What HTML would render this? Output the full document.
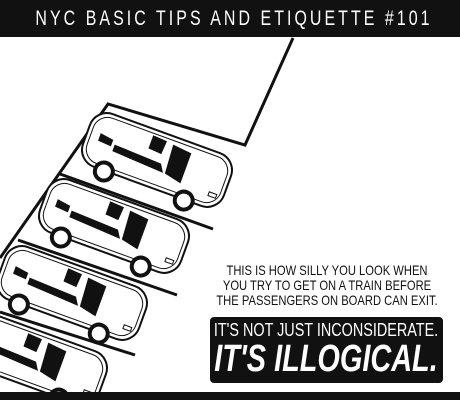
<!DOCTYPE html>
<html><head><style>
html,body{margin:0;padding:0;background:#fff;}
body{width:460px;height:400px;position:relative;overflow:hidden;font-family:"Liberation Sans",sans-serif;}
.hdr{position:absolute;left:0;top:0;width:460px;height:37px;background:#111;}
.hdr div{position:absolute;left:234px;top:0;white-space:nowrap;color:#fff;font-size:21px;letter-spacing:4px;line-height:37px;transform:translateX(-50%) scaleX(.76);}
.ftr{position:absolute;left:0;top:392px;width:460px;height:8px;background:#111;}
.ln{position:absolute;left:327px;white-space:nowrap;transform:translateX(-50%) scaleX(.8);font-size:14px;line-height:15px;color:#111;}
.box{position:absolute;left:210px;top:317px;width:233px;height:66px;background:#111;border-radius:4px;}
.bx{position:absolute;left:116px;white-space:nowrap;color:#fff;}
.b1{top:3px;font-size:18px;line-height:20px;transform:translateX(-50%) scaleX(.8);}
.b2{top:22px;font-size:38px;line-height:40px;font-style:italic;font-weight:bold;transform:translateX(-50%) scaleX(.76);}
</style></head><body>
<div class="hdr"><div>NYC BASIC TIPS AND ETIQUETTE #101</div></div>
<svg width="460" height="400" style="position:absolute;left:0;top:0">
<defs>
<g id="car">
<rect x="-75" y="-28" width="150" height="56" rx="18" fill="#fff" stroke="#111" stroke-width="2"/>
<rect x="-71" y="-24" width="142" height="48" rx="15" fill="none" stroke="#111" stroke-width="1"/>
<polygon points="10,-20 30,-18 30,14 12,10" fill="#111"/>
<polygon points="-12,-22 3,-21 2,-7 -12,-8" fill="#111"/>
<polygon points="-45,0 5,2 10,10 -45,7" fill="#111"/>
<polygon points="-62,-6 -48,-4 -48,3 -62,2" fill="#111"/>
<circle cx="-46" cy="29" r="9" fill="#fff" stroke="#111" stroke-width="4"/>
<circle cx="39" cy="29" r="9" fill="#fff" stroke="#111" stroke-width="4"/>
<rect x="60" y="12" width="8" height="4" fill="none" stroke="#111" stroke-width="1"/>
</g>
</defs>
<polyline points="293,38 245,145 108,104 0,258" fill="none" stroke="#111" stroke-width="3"/>
<g stroke="#111" stroke-width="3" fill="none">
<line x1="60" y1="174" x2="213" y2="229"/>
<line x1="18" y1="240" x2="177" y2="295"/>
<line x1="0" y1="312" x2="135" y2="355"/>
</g>
<use href="#car" transform="translate(157,160) rotate(20)"/>
<use href="#car" transform="translate(114,226) rotate(20)"/>
<use href="#car" transform="translate(72,293) rotate(20)"/>
<use href="#car" transform="translate(32,358) rotate(20)"/>
</svg>
<div class="ln" style="top:263px">THIS IS HOW SILLY YOU LOOK WHEN</div>
<div class="ln" style="top:278px">YOU TRY TO GET ON A TRAIN BEFORE</div>
<div class="ln" style="top:293px">THE PASSENGERS ON BOARD CAN EXIT.</div>
<div class="box"><div class="bx b1">IT'S NOT JUST INCONSIDERATE.</div><div class="bx b2">IT'S ILLOGICAL.</div></div>
<div class="ftr"></div>
</body></html>
